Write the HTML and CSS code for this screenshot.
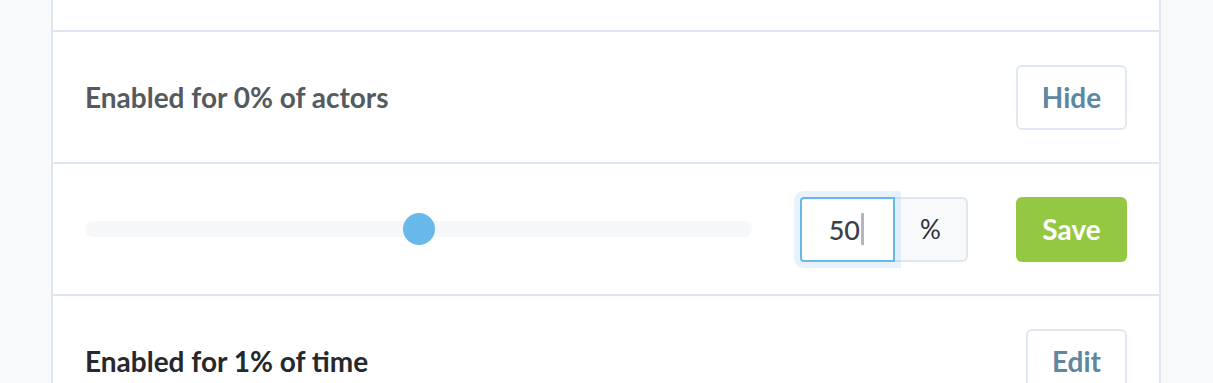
FILE: index.html
```html
<!DOCTYPE html>
<html>
<head>
<meta charset="utf-8">
<link rel="stylesheet" href="styles.css">
</head>
<body>
<div class="page">
  <div class="card">
    <div class="row row-top"></div>
    <div class="row">
      <div class="label muted">Enabled for 0% of actors</div>
      <button class="btn btn-outline">Hide</button>
    </div>
    <div class="row">
      <div class="slider">
        <div class="track"></div>
        <div class="thumb" style="left: 50%"></div>
      </div>
      <div class="input-group">
        <div class="input"><span class="value">50</span><span class="caret"></span></div>
        <div class="addon">%</div>
      </div>
      <button class="btn btn-save">Save</button>
    </div>
    <div class="row">
      <div class="label dark">Enabled for 1% of time</div>
      <button class="btn btn-outline btn-edit">Edit</button>
    </div>
  </div>
</div>
</body>
</html>
```

FILE: styles.css
```css
* { box-sizing: border-box; }
html, body {
  margin: 0;
  padding: 0;
  background: #f8f9fb;
  font-family: "Lato", "Liberation Sans", sans-serif;
  overflow: hidden;
}
.page {
  width: 1213px;
  height: 383px;
  overflow: hidden;
  padding-left: 51px;
  padding-right: 52px;
}
.card {
  background: #fff;
  border-left: 2px solid #dde6f1;
  border-right: 2px solid #dde6f1;
  height: 383px;
}
.row {
  display: flex;
  align-items: center;
  gap: 48px;
  height: 132px;
  padding: 0 32px;
  border-bottom: 2px solid #dde6f1;
}
.row-top {
  height: 32px;
}
.label {
  flex: 1;
  font-size: 28px;
  font-weight: 700;
}
.muted { color: #555a5f; }
.dark { color: #25282c; }
.btn {
  height: 65px;
  border-radius: 6px;
  font-family: "Lato", "Liberation Sans", sans-serif;
  font-size: 28px;
  font-weight: 700;
  padding: 0;
  width: 111px;
  cursor: pointer;
}
.btn-outline {
  background: #fff;
  border: 2px solid #dfe7f1;
  color: #5d88a1;
}
.btn-edit { width: 101px; }
.btn-save {
  background: #94c843;
  border: none;
  color: #fff;
}
.slider {
  flex: 1;
  position: relative;
  height: 32px;
  display: flex;
  align-items: center;
}
.track {
  width: 100%;
  height: 16px;
  border-radius: 8px;
  background: #f5f7f9;
}
.thumb {
  position: absolute;
  top: 0;
  width: 32px;
  height: 32px;
  margin-left: -16px;
  border-radius: 50%;
  background: #68b8ea;
}
.input-group {
  display: flex;
  height: 65px;
}
.input {
  position: relative;
  z-index: 1;
  width: 95px;
  height: 65px;
  border: 2px solid #6bb6e8;
  border-radius: 4px 0 0 4px;
  background: #fff;
  box-shadow: 0 0 0 6px rgba(115, 190, 240, 0.18);
  display: flex;
  align-items: center;
  justify-content: flex-end;
  padding-right: 29px;
  font-size: 27px;
  font-weight: 500;
  color: #3b4046;
}
.caret {
  display: inline-block;
  width: 3px;
  height: 32px;
  margin-left: 1px;
  background: #b3b6ba;
}
.addon {
  width: 73px;
  height: 65px;
  border: 2px solid #dfe7f1;
  border-left: none;
  border-radius: 0 6px 6px 0;
  background: #f7f9fb;
  display: flex;
  align-items: center;
  justify-content: center;
  font-size: 26px;
  color: #2c2f33;
}
```
